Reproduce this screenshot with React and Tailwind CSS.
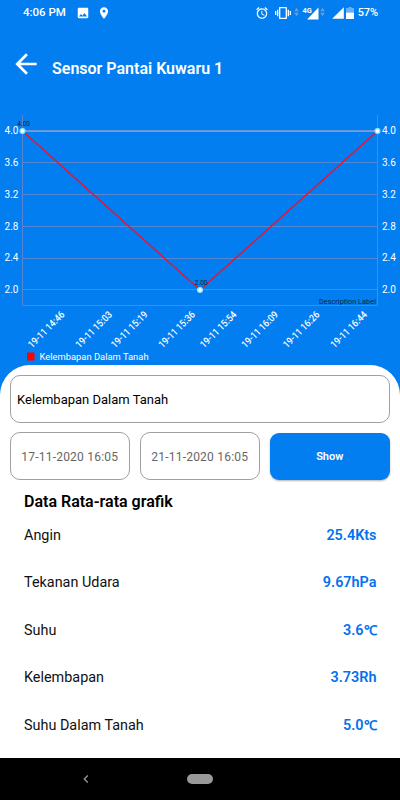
import { MdAlarm, MdArrowBack, MdChevronLeft, MdImage, MdPlace, MdSignalCellular4Bar, MdVibration } from 'react-icons/md';

const BLUE = '#027ef0';

const readings = [
    { label: 'Angin', value: '25.4Kts' },
    { label: 'Tekanan Udara', value: '9.67hPa' },
    { label: 'Suhu', value: '3.6', unit: '℃' },
    { label: 'Kelembapan', value: '3.73Rh' },
    { label: 'Suhu Dalam Tanah', value: '5.0', unit: '℃' },
];

const yTicks = [
    ['4.0', 131],
    ['3.6', 162.5],
    ['3.2', 194.5],
    ['2.8', 226.5],
    ['2.4', 258],
    ['2.0', 289.5],
];

const xTicks = [
    ['19-11 14:46', 32],
    ['19-11 15:03', 79.5],
    ['19-11 15:19', 115],
    ['19-11 15:36', 162.5],
    ['19-11 15:54', 204],
    ['19-11 16:09', 245.5],
    ['19-11 16:26', 287],
    ['19-11 16:44', 334.5],
];

function DataArrows() {
    return (
        <svg width="5" height="10" viewBox="0 0 6 10" fill="#6f9fd0">
            <path d="M3 0l2.7 4.2h-5.4zM3 10l2.7-4.2h-5.4z" />
        </svg>
    );
}

function StatusBar() {
    return (
        <div className="flex h-[26px] items-center pl-[23px] pr-[22px] text-[11px] font-medium text-white">
            <span className="w-[53px] whitespace-nowrap text-[11.5px]">4:06 PM</span>
            <MdImage className="size-[14px]" />
            <MdPlace className="ml-[7px] size-[14px]" />
            <div className="ml-auto flex items-center">
                <MdAlarm className="size-[14px]" />
                <MdVibration className="ml-[6px] size-[16px]" />
                <span className="ml-[3px] mt-[-2px]"><DataArrows /></span>
                <svg className="ml-[3px]" width="18" height="14" viewBox="0 0 18 14">
                    <path d="M16.5 1.5v12H5z" fill="#fff" />
                    <text x="0.5" y="7.2" fontSize="7.4" fontWeight="700" fill="#fff" stroke={BLUE} strokeWidth="1" paintOrder="stroke">4G</text>
                </svg>
                <span className="mt-[-2px]"><DataArrows /></span>
                <MdSignalCellular4Bar className="ml-[6px] size-[14px]" />
                <svg className="ml-px" width="8" height="12" viewBox="0 0 8 12">
                    <path d="M2.5 0h3v1H8v4.5H0V1h2.5z" fill="#67b2f6" />
                    <path d="M0 5.5h8V12H0z" fill="#fff" />
                </svg>
                <span className="ml-[4px] tracking-[-0.1px]">57%</span>
            </div>
        </div>
    );
}

function Chart() {
    return (
        <svg className="block" width="400" height="260" viewBox="0 105 400 260">
            <g stroke="#5787d4" strokeWidth="1">
                <path d="M22.5 115V305.5H377.5V115" fill="none" />
                {yTicks.map(([label, y]) => (
                    <path key={label} d={`M22 ${Math.floor(y) + 0.5}H378`} />
                ))}
            </g>
            <path d="M22 131H378" stroke="#8c9fd0" strokeWidth="1.3" />

            <g fill="#fff" fontSize="10" fontWeight="400">
                {yTicks.map(([label, y]) => (
                    <g key={label}>
                        <text x="18.5" y={y + 3.2} textAnchor="end">{label}</text>
                        <text x="382" y={y + 3.2}>{label}</text>
                    </g>
                ))}
                {xTicks.map(([label, x]) => (
                    <text key={label} transform={`translate(${x} 348.5) rotate(-45)`} fontWeight="500" textLength="47" lengthAdjust="spacingAndGlyphs">{label}</text>
                ))}
            </g>

            <path d="M22.5 131L200 290L377.5 131" fill="none" stroke="#ff0a20" strokeWidth="1.3" />
            <g fill="#fff" stroke="#8ce9fb" strokeWidth="1.3">
                <circle cx="22.5" cy="131" r="2.4" />
                <circle cx="200" cy="290" r="2.4" />
                <circle cx="377.5" cy="131" r="2.4" />
            </g>

            <g fill="#06264a" fontSize="6.5">
                <text x="23.7" y="126" textAnchor="middle">4.00</text>
                <text x="201.2" y="285" textAnchor="middle">2.00</text>
                <text x="376" y="304" textAnchor="end" fontSize="7.4">Description Label</text>
            </g>

            <path d="M27 352.5h7.5v8h-7.5z" fill="#f00" />
            <text x="39.5" y="360" fill="#fff" fontSize="9.4">Kelembapan Dalam Tanah</text>
        </svg>
    );
}

function DateField({ value }) {
    return (
        <div className="flex h-[48px] w-[120.5px] items-center justify-center whitespace-nowrap rounded-[10px] border border-[#a0a0a0] pt-[1px] text-[12px] tracking-[0.22px] text-[#666]">
            {value}
        </div>
    );
}

export default function App() {
    return (
        <div className="flex h-[800px] w-[400px] flex-col overflow-hidden bg-[#027ef0] font-['Roboto',sans-serif]">
            <StatusBar />

            <header className="flex h-[79px] items-center pl-[10px] text-white">
                <MdArrowBack className="mt-[-4px] size-[32px]" />
                <h1 className="ml-[10px] mt-[6px] text-[16px] font-semibold">Sensor Pantai Kuwaru 1</h1>
            </header>

            <Chart />

            <main className="flex-1 rounded-t-[30px] bg-white pl-[9.5px] pr-[9px] pt-[10px]">
                <div className="flex h-[48px] w-[380.5px] items-center rounded-[10px] border border-[#a0a0a0] pl-[6.5px] pt-[1px] text-[13px] text-black">
                    Kelembapan Dalam Tanah
                </div>

                <div className="mt-[9px] flex gap-[9.5px]">
                    <DateField value="17-11-2020 16:05" />
                    <DateField value="21-11-2020 16:05" />
                    <button className="mt-[1px] h-[47px] w-[120.5px] rounded-[9px] bg-[#027ef0] pt-[2px] text-[11px] font-semibold text-white shadow-[0_1px_2px_rgba(0,0,0,0.3)]">
                        Show
                    </button>
                </div>

                <h2 className="ml-[14.5px] mt-[10px] text-[16px] leading-[24px] font-semibold text-black">Data Rata-rata grafik</h2>

                <dl className="pl-[14.5px] pr-[14.5px]">
                    {readings.map(({ label, value, unit }) => (
                        <div key={label} className="flex h-[47.4px] items-start justify-between pt-[10px] text-[14.4px] leading-[24px]">
                            <dt className="text-[#111]">{label}</dt>
                            <dd className="font-semibold text-[#0272ee]">
                                {value}
                                {unit && <span className="text-[13.4px]">{unit}</span>}
                            </dd>
                        </div>
                    ))}
                </dl>
            </main>

            <nav className="flex h-[42px] items-center bg-black">
                <MdChevronLeft className="ml-[78px] size-[16px] text-[#999]" />
                <div className="ml-[93px] h-[10px] w-[26px] rounded-full bg-[#999]" />
            </nav>
        </div>
    );
}
